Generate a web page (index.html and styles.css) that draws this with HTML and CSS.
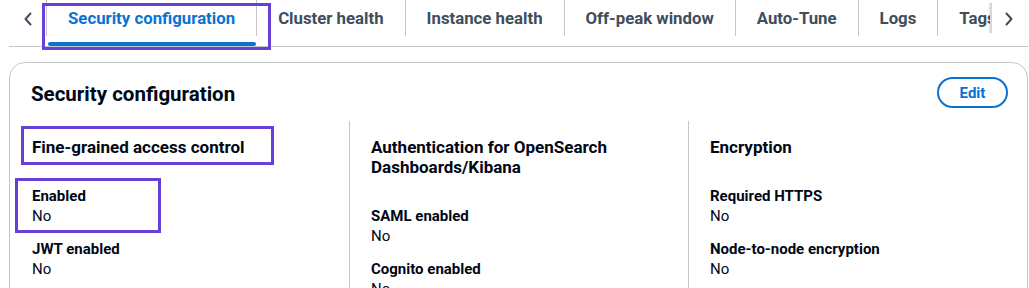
FILE: index.html
```html
<!DOCTYPE html>
<html>
<head>
    <title>Security configuration</title>
    <meta name="viewport" content="width=device-width, initial-scale=1.0">
    <link rel="stylesheet" href="styles.css">
</head>
<body>
    <div class='page'>
        <div class='tab-header'>
            <div class='scroll-btn'>
                <svg width='10' height='14' viewBox='0 0 10 14'><polyline points='7.5,1.5 2.5,7 7.5,12.5' fill='none' stroke='#414d5c' stroke-width='2' stroke-linecap='round' stroke-linejoin='round'/></svg>
            </div>
            <div class='tab-list'>
                <div class='tab tab-active first'>
                    <div class='tab-label'>Security configuration</div>
                    <div class='tab-underline'></div>
                </div>
                <div class='tab'><div class='tab-label'>Cluster health</div></div>
                <div class='tab'><div class='tab-label'>Instance health</div></div>
                <div class='tab'><div class='tab-label'>Off-peak window</div></div>
                <div class='tab'><div class='tab-label'>Auto-Tune</div></div>
                <div class='tab'><div class='tab-label'>Logs</div></div>
                <div class='tab'><div class='tab-label'>Tags</div></div>
            </div>
            <div class='scroll-btn scroll-right'>
                <svg width='10' height='14' viewBox='0 0 10 14'><polyline points='2.5,1.5 7.5,7 2.5,12.5' fill='none' stroke='#414d5c' stroke-width='2' stroke-linecap='round' stroke-linejoin='round'/></svg>
            </div>
        </div>

        <div class='card'>
            <div class='card-header'>
                <h2>Security configuration</h2>
                <button class='button'>Edit</button>
            </div>
            <div class='columns'>
                <div class='column'>
                    <h3>Fine-grained access control</h3>
                    <div class='pair'>
                        <div class='key'>Enabled</div>
                        <div class='value'>No</div>
                    </div>
                    <div class='pair'>
                        <div class='key'>JWT enabled</div>
                        <div class='value'>No</div>
                    </div>
                </div>
                <div class='column'>
                    <h3>Authentication for OpenSearch Dashboards/Kibana</h3>
                    <div class='pair'>
                        <div class='key'>SAML enabled</div>
                        <div class='value'>No</div>
                    </div>
                    <div class='pair'>
                        <div class='key'>Cognito enabled</div>
                        <div class='value'>No</div>
                    </div>
                </div>
                <div class='column'>
                    <h3>Encryption</h3>
                    <div class='pair'>
                        <div class='key'>Required HTTPS</div>
                        <div class='value'>No</div>
                    </div>
                    <div class='pair'>
                        <div class='key'>Node-to-node encryption</div>
                        <div class='value'>No</div>
                    </div>
                </div>
            </div>
        </div>

        <!-- highlight marks drawn over the screenshot -->
        <div class='mark mark-tab'></div>
        <div class='mark mark-heading'></div>
        <div class='mark mark-enabled'></div>
    </div>
</body>
</html>
```

FILE: styles.css
```css
html {
    font-family: 'Roboto', sans-serif;
}
body {
    margin: 0;
    background: #ffffff;
    color: #000716;
    overflow: hidden;
}
.page {
    position: relative;
    margin-left: 9px;
    width: 1019px;
}

/* tabs */
.tab-header {
    display: flex;
    height: 46px;
    border-bottom: 1px solid #c6c6cd;
}
.scroll-btn {
    width: 37px;
    height: 36px;
    display: flex;
    align-items: center;
    justify-content: center;
}
.scroll-btn svg {
    margin-top: 1px;
}
.scroll-right {
    width: 38px;
    position: relative;
}
.scroll-right::before {
    content: '';
    position: absolute;
    left: 0;
    top: 3px;
    bottom: 3px;
    width: 2px;
    background: #d5d7dc;
    box-shadow: -1px 0 2px rgba(0, 7, 22, 0.12);
}
.tab-list {
    flex: 1;
    display: flex;
    overflow: hidden;
}
.tab {
    display: flex;
    flex-direction: column;
    flex-shrink: 0;
}
.tab-label {
    height: 36px;
    box-sizing: border-box;
    padding: 8px 21px 0 21px;
    border-right: 1px solid #c6c6cd;
    font-size: 16.8px;
    line-height: 20px;
    font-weight: 700;
    color: #414d5c;
    white-space: nowrap;
}
.tab.first .tab-label {
    border-left: 1px solid #c6c6cd;
}
.tab-active .tab-label {
    color: #0972d3;
}
.tab-underline {
    height: 4px;
    margin: 6px 1px 0 2px;
    border-radius: 2px;
    background: #0972d3;
}

/* card */
.card {
    margin-top: 15px;
    border: 1px solid #c6c6cd;
    border-radius: 16px;
    min-height: 260px;
}
.card-header {
    display: flex;
    justify-content: space-between;
    align-items: flex-start;
    padding: 14px 19px 0 21px;
}
.card-header h2 {
    margin: 5px 0 0 0;
    font-size: 20.5px;
    line-height: 24px;
    font-weight: 700;
}
.button {
    height: 31px;
    padding: 0 18px;
    border: 2px solid #0972d3;
    border-radius: 20px;
    background: #ffffff;
    color: #0972d3;
    font-family: 'Roboto', sans-serif;
    font-size: 15px;
    font-weight: 700;
    width: 71px;
    cursor: pointer;
}

.columns {
    display: grid;
    grid-template-columns: repeat(3, 1fr);
    margin-top: 13px;
}
.column {
    padding: 16px 20px 0 21px;
    border-left: 1px solid #c6c6cd;
}
.column:first-child {
    border-left-color: transparent;
}
.column h3 {
    margin: 0 0 29px 0;
    font-size: 17px;
    line-height: 20px;
    font-weight: 700;
}
.pair {
    margin-bottom: 13px;
    font-size: 15px;
    line-height: 20px;
}
.key {
    font-weight: 700;
}

/* purple highlight marks */
.mark {
    position: absolute;
    box-sizing: border-box;
    border: 3px solid #6940d6;
}
.mark-tab {
    left: 33px;
    top: 3px;
    width: 229px;
    height: 47px;
}
.mark-heading {
    left: 12px;
    top: 126px;
    width: 253px;
    height: 39px;
}
.mark-enabled {
    left: 6px;
    top: 178px;
    width: 146px;
    height: 55px;
}
```
